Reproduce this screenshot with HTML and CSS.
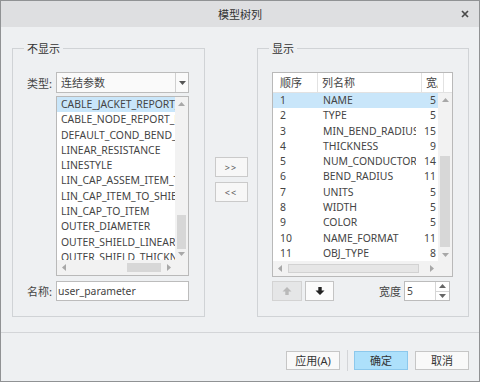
FILE: index.html
```html
<!DOCTYPE html>
<html lang="zh">
<head>
  <meta charset="UTF-8">
  <title>模型树列</title>
  <link rel="stylesheet" href="styles.css">
</head>
<body>
  <div class="window">
    <div class="titlebar">
      <span></span>
      <span class="title">模型树列</span>
      <span class="close"><svg width="8" height="8" viewBox="0 0 8 8"><path d="M1 1 L7 7 M7 1 L1 7" stroke="#4a4a4a" stroke-width="1.7"/></svg></span>
    </div>

    <div class="body">
      <fieldset class="group group-left">
        <legend>不显示</legend>
        <div class="field">
          <label>类型:</label>
          <div class="select">
            <span class="select-text">连结参数</span>
            <span class="caret"><svg width="7" height="4" viewBox="0 0 7 4"><path d="M0 0 H7 L3.5 4 Z" fill="#555"/></svg></span>
          </div>
        </div>
        <div class="listbox">
          <div class="items">
            <div class="item selected">CABLE_JACKET_REPORT_NAME</div>
            <div class="item">CABLE_NODE_REPORT_NAME</div>
            <div class="item">DEFAULT_COND_BEND_RADIUS</div>
            <div class="item">LINEAR_RESISTANCE</div>
            <div class="item">LINESTYLE</div>
            <div class="item">LIN_CAP_ASSEM_ITEM_TO_ITEM</div>
            <div class="item">LIN_CAP_ITEM_TO_SHIELD</div>
            <div class="item">LIN_CAP_TO_ITEM</div>
            <div class="item">OUTER_DIAMETER</div>
            <div class="item">OUTER_SHIELD_LINEAR_RESISTANCE</div>
            <div class="item">OUTER_SHIELD_THICKNESS</div>
          </div>
          <div class="vscroll">
            <span class="arr"><svg width="7" height="4" viewBox="0 0 7 4"><path d="M0 4 H7 L3.5 0 Z"/></svg></span>
            <div class="vtrack"><div class="thumb thumb-left-v"></div></div>
            <span class="arr"><svg width="7" height="4" viewBox="0 0 7 4"><path d="M0 0 H7 L3.5 4 Z"/></svg></span>
          </div>
          <div class="hscroll">
            <span class="arr"><svg width="4" height="7" viewBox="0 0 4 7"><path d="M4 0 V7 L0 3.5 Z"/></svg></span>
            <div class="htrack"><div class="thumb thumb-left-h"></div></div>
            <span class="arr"><svg width="4" height="7" viewBox="0 0 4 7"><path d="M0 0 V7 L4 3.5 Z"/></svg></span>
          </div>
          <div class="corner"></div>
        </div>
        <div class="field field-name">
          <label>名称:</label>
          <div class="input">user_parameter</div>
        </div>
      </fieldset>

      <div class="mover">
        <button class="btn-move">&gt;&gt;</button>
        <button class="btn-move">&lt;&lt;</button>
      </div>

      <fieldset class="group group-right">
        <legend>显示</legend>
        <div class="table">
          <div class="thead">
            <div class="th c1">顺序</div>
            <div class="th c2">列名称</div>
            <div class="th c3">宽度</div>
            <div class="th c4"></div>
          </div>
          <div class="tbody">
            <div class="rows">
              <div class="tr selected"><span class="c1">1</span><span class="c2">NAME</span><span class="c3">5</span></div>
              <div class="tr"><span class="c1">2</span><span class="c2">TYPE</span><span class="c3">5</span></div>
              <div class="tr"><span class="c1">3</span><span class="c2">MIN_BEND_RADIUS</span><span class="c3">15</span></div>
              <div class="tr"><span class="c1">4</span><span class="c2">THICKNESS</span><span class="c3">9</span></div>
              <div class="tr"><span class="c1">5</span><span class="c2">NUM_CONDUCTORS</span><span class="c3">14</span></div>
              <div class="tr"><span class="c1">6</span><span class="c2">BEND_RADIUS</span><span class="c3">11</span></div>
              <div class="tr"><span class="c1">7</span><span class="c2">UNITS</span><span class="c3">5</span></div>
              <div class="tr"><span class="c1">8</span><span class="c2">WIDTH</span><span class="c3">5</span></div>
              <div class="tr"><span class="c1">9</span><span class="c2">COLOR</span><span class="c3">5</span></div>
              <div class="tr"><span class="c1">10</span><span class="c2">NAME_FORMAT</span><span class="c3">11</span></div>
              <div class="tr"><span class="c1">11</span><span class="c2">OBJ_TYPE</span><span class="c3">8</span></div>
            </div>
            <div class="vscroll">
              <span class="arr"><svg width="7" height="4" viewBox="0 0 7 4"><path d="M0 4 H7 L3.5 0 Z"/></svg></span>
              <div class="vtrack"><div class="thumb thumb-right-v"></div></div>
              <span class="arr"><svg width="7" height="4" viewBox="0 0 7 4"><path d="M0 0 H7 L3.5 4 Z"/></svg></span>
            </div>
            <div class="hscroll">
              <span class="arr"><svg width="4" height="7" viewBox="0 0 4 7"><path d="M4 0 V7 L0 3.5 Z"/></svg></span>
              <div class="htrack"><div class="thumb thumb-right-h"></div></div>
              <span class="arr"><svg width="4" height="7" viewBox="0 0 4 7"><path d="M0 0 V7 L4 3.5 Z"/></svg></span>
            </div>
            <div class="corner"></div>
          </div>
        </div>
        <div class="toolbar">
          <button class="btn-arrow" disabled><svg width="10" height="10" viewBox="0 0 10 10"><path d="M5 1 L9.5 5.5 H6.7 V9 H3.3 V5.5 H0.5 Z" fill="#b9b9b9"/></svg></button>
          <button class="btn-arrow btn-down"><svg width="10" height="10" viewBox="0 0 10 10"><path d="M5 9 L9.5 4.5 H6.7 V1 H3.3 V4.5 H0.5 Z" fill="#222"/></svg></button>
          <span class="spacer"></span>
          <label class="width-label">宽度</label>
          <div class="spin">
            <div class="spin-input">5</div>
            <div class="spin-btns">
              <span><svg width="7" height="4" viewBox="0 0 7 4"><path d="M0 4 H7 L3.5 0 Z"/></svg></span>
              <span><svg width="7" height="4" viewBox="0 0 7 4"><path d="M0 0 H7 L3.5 4 Z"/></svg></span>
            </div>
          </div>
        </div>
      </fieldset>
    </div>

    <div class="footer">
      <button class="btn">应用(A)</button>
      <span class="sep"></span>
      <button class="btn btn-primary">确定</button>
      <button class="btn btn-cancel">取消</button>
    </div>
  </div>
</body>
</html>
```

FILE: styles.css
```css
* {
  box-sizing: border-box;
}
body {
  margin: 0;
  background: #ffffff;
  font-family: "Noto Sans", "Noto Sans CJK SC", sans-serif;
  color: #3d3d3d;
}
.window {
  width: 480px;
  height: 382px;
  border: 1px solid #909294;
  background: #eef0f2;
  display: flex;
  flex-direction: column;
}
.titlebar {
  height: 26px;
  flex: 0 0 auto;
  background: #dedfe1;
  display: grid;
  grid-template-columns: 1fr auto 1fr;
  align-items: center;
  font-family: "Noto Sans CJK SC", sans-serif;
  font-size: 11px;
  color: #333;
}
.close {
  justify-self: end;
  margin-right: 10px;
  display: flex;
}
.body {
  flex: 1;
  display: flex;
  padding: 13px 10px 15px 11px;
}
.group {
  margin: 0;
  min-width: 0;
  border: 1px solid #d0d3d6;
  padding: 16px 15px 15px 14px;
  display: flex;
  flex-direction: column;
}
.group legend {
  padding: 0 3px;
  margin-left: -3px;
  font-family: "Noto Sans CJK SC", sans-serif;
  font-size: 11px;
  line-height: 16px;
  color: #333;
}
.group-left {
  width: 193px;
}
.group-right {
  width: 212px;
}

/* left column */
.field {
  display: flex;
  align-items: center;
}
.field label {
  width: 29px;
  font-family: "Noto Sans CJK SC", sans-serif;
  font-size: 11px;
  color: #444;
}
.select {
  flex: 1;
  height: 21px;
  display: flex;
  border: 1px solid #bcbcbc;
  background: #fafafa;
}
.select-text {
  flex: 1;
  padding-left: 4px;
  font-family: "Noto Sans CJK SC", sans-serif;
  font-size: 11px;
  line-height: 19px;
  color: #444;
}
.caret {
  width: 13px;
  border-left: 1px solid #d0d0d0;
  display: flex;
  align-items: center;
  justify-content: center;
}
.listbox {
  margin: 3px 0 0 29px;
  height: 180px;
  border: 1px solid #b9b9b9;
  background: #fff;
  display: grid;
  grid-template-columns: 1fr 13px;
  grid-template-rows: 1fr 15px;
}
.items {
  overflow: hidden;
  font-size: 10.4px;
  color: #444;
}
.item {
  height: 15.3px;
  line-height: 15.3px;
  padding-left: 4px;
  white-space: nowrap;
}
.selected {
  background: #c9e6fa;
}
.field-name {
  margin-top: 5px;
}
.input {
  flex: 1;
  height: 20px;
  border: 1px solid #bcbcbc;
  background: #fff;
  padding-left: 1px;
  font-size: 10.4px;
  line-height: 18px;
  color: #444;
}

/* scrollbars */
.vscroll {
  background: #f2f2f2;
  display: flex;
  flex-direction: column;
}
.hscroll {
  background: #f2f2f2;
  display: flex;
}
.corner {
  background: #f2f2f2;
}
.arr {
  flex: 0 0 13px;
  display: flex;
  align-items: center;
  justify-content: center;
  fill: #a8a8a8;
}
.vtrack {
  flex: 1;
  position: relative;
}
.htrack {
  flex: 1;
  position: relative;
}
.thumb {
  position: absolute;
  background: #d7d7d7;
}
.thumb-left-v {
  left: 2px;
  right: 2px;
  top: 105px;
  height: 34px;
}
.thumb-left-h {
  top: 3px;
  bottom: 3px;
  left: 57px;
  width: 34px;
}
.thumb-right-v {
  left: 2px;
  right: 2px;
  top: 50px;
  height: 91px;
}
.thumb-right-h {
  top: 3px;
  bottom: 3px;
  left: 2px;
  width: 131px;
  background: #e6e6e6;
  border: 1px solid #d2d2d2;
}

/* middle buttons */
.mover {
  width: 52px;
  display: flex;
  flex-direction: column;
  align-items: center;
  justify-content: center;
  gap: 5px;
  padding-top: 2px;
}
.btn-move {
  width: 33px;
  height: 20px;
  padding: 0;
  border: 1px solid #cacaca;
  background: #f7f7f7;
  font-family: "Noto Sans", sans-serif;
  font-size: 9px;
  letter-spacing: 1px;
  color: #555;
}

/* right table */
.table {
  height: 205px;
  border: 1px solid #b9b9b9;
  background: #fff;
  display: flex;
  flex-direction: column;
}
.thead {
  height: 20px;
  display: flex;
  border-bottom: 1px solid #e2e2e2;
  font-family: "Noto Sans CJK SC", sans-serif;
  font-size: 11px;
  color: #444;
}
.th {
  border-right: 1px solid #e2e2e2;
  line-height: 19px;
  overflow: hidden;
  white-space: nowrap;
}
.thead .c1 {
  width: 45px;
  padding-left: 7px;
}
.thead .c2 {
  width: 104px;
  padding-left: 4px;
}
.thead .c3 {
  width: 16px;
  padding-left: 4px;
  border-right: 0;
}
.thead .c4 {
  flex: 1;
  border-left: 1px solid #e2e2e2;
  margin-left: 5px;
  border-right: 0;
}
.tbody {
  flex: 1;
  display: grid;
  grid-template-columns: 1fr 14px;
  grid-template-rows: 1fr 15px;
  min-height: 0;
}
.rows {
  overflow: hidden;
  font-size: 10.4px;
  color: #444;
}
.tr {
  height: 15.3px;
  line-height: 15.3px;
  display: flex;
  white-space: nowrap;
}
.tr span {
  overflow: hidden;
}
.tr .c1 {
  width: 45px;
  padding-left: 7px;
}
.tr .c2 {
  width: 98px;
  margin-right: 6px;
  padding-left: 5px;
}
.tr .c3 {
  flex: 1;
  text-align: right;
  padding-right: 2px;
}
.toolbar {
  margin-top: 4px;
  height: 20px;
  display: flex;
  align-items: stretch;
}
.btn-arrow {
  width: 30px;
  padding: 0;
  border: 1px solid #d3d3d3;
  background: #e5e6e7;
  display: flex;
  align-items: center;
  justify-content: center;
}
.btn-down {
  width: 29px;
  margin-left: 3px;
  background: #fbfbfb;
  border-color: #c4c4c4;
}
.spacer {
  flex: 1;
}
.width-label {
  align-self: center;
  font-family: "Noto Sans CJK SC", sans-serif;
  font-size: 11px;
  color: #444;
  margin-right: 3px;
}
.spin {
  display: flex;
  margin-right: 3px;
  border: 1px solid #bcbcbc;
  background: #fff;
}
.spin-input {
  width: 30px;
  padding-left: 2px;
  font-size: 10.4px;
  line-height: 18px;
  color: #444;
}
.spin-btns {
  width: 14px;
  border-left: 1px solid #d6d6d6;
  display: flex;
  flex-direction: column;
  fill: #666;
}
.spin-btns span {
  flex: 1;
  display: flex;
  align-items: center;
  justify-content: center;
}
.spin-btns span + span {
  border-top: 1px solid #d6d6d6;
}

/* footer */
.footer {
  height: 49px;
  flex: 0 0 auto;
  border-top: 1px solid #d3d5d8;
  display: flex;
  justify-content: flex-end;
  align-items: flex-start;
  padding: 18px 10px 0 0;
}
.btn {
  width: 54px;
  height: 19px;
  padding: 0;
  border: 1px solid #c6c6c6;
  background: #f9f9f9;
  font-family: "Noto Sans", "Noto Sans CJK SC", sans-serif;
  font-size: 11px;
  line-height: 17px;
  color: #333;
}
.sep {
  width: 1px;
  height: 21px;
  margin: -1px 6px 0 7px;
  background: #d3d5d8;
}
.btn-primary {
  background: #ade0fb;
  border-color: #8cc8ec;
}
.btn-cancel {
  margin-left: 7px;
}
```
